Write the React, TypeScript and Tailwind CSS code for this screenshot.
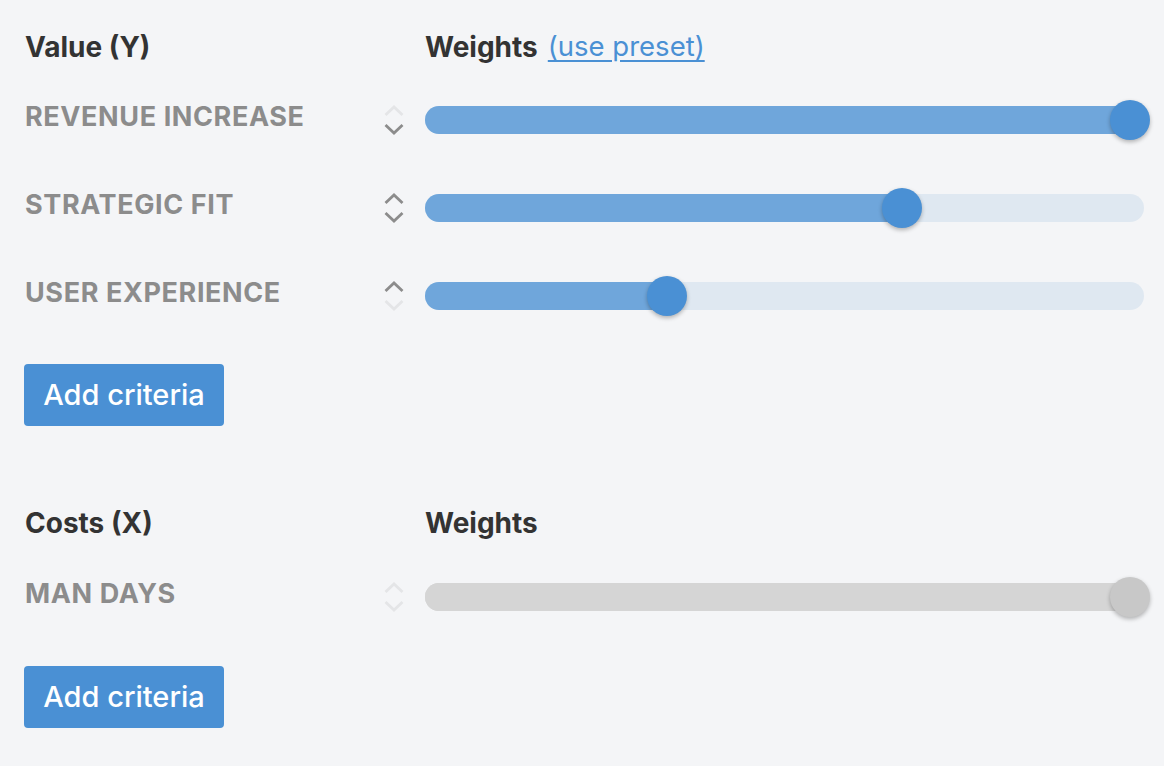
import React from "react";

const font = { fontFamily: "Inter, 'Noto Sans', sans-serif" };

function Chevrons({ up, down }: { up: boolean; down: boolean }) {
  const on = "#8c8c8c";
  const off = "#e4e5e7";
  return (
    <div className="flex w-[60px] flex-col items-center justify-center gap-[6px] pr-[2px]">
      <svg width="22" height="13" viewBox="0 0 22 13">
        <path d="M2.5 11 L11 3 L19.5 11" fill="none" stroke={up ? on : off} strokeWidth="2.8" />
      </svg>
      <svg width="22" height="13" viewBox="0 0 22 13">
        <path d="M2.5 2 L11 10 L19.5 2" fill="none" stroke={down ? on : off} strokeWidth="2.8" />
      </svg>
    </div>
  );
}

function Slider({ pct, disabled }: { pct: number; disabled?: boolean }) {
  const fill = disabled ? "bg-[#d5d5d5]" : "bg-[#6fa6db]";
  const rest = disabled ? "bg-[#d5d5d5]" : "bg-[#dfe8f1]";
  const knob = disabled ? "bg-[#c8c8c8]" : "bg-[#4a90d4]";
  return (
    <div className={`relative h-[28px] flex-1 rounded-full ${rest}`}>
      <div className={`absolute left-0 top-0 h-full rounded-full ${fill}`} style={{ width: `${pct}%` }} />
      <div
        className={`absolute top-1/2 h-[40px] w-[40px] -translate-x-1/2 -translate-y-1/2 rounded-full shadow-[0_2px_4px_rgba(0,0,0,0.28)] ${knob}`}
        style={{ left: `${pct}%` }}
      />
    </div>
  );
}

function Row({ label, pct, up, down, disabled }: { label: string; pct: number; up: boolean; down: boolean; disabled?: boolean }) {
  return (
    <div className="flex h-[88px] items-center">
      <div className="w-[340px] pb-[6px] text-[27px] font-bold tracking-[0.6px] text-[#8c8c8c]">{label}</div>
      <Chevrons up={up} down={down} />
      <Slider pct={pct} disabled={disabled} />
    </div>
  );
}

export default function App() {
  return (
    <div className="min-h-[766px] w-[1164px] bg-[#f4f5f7] pl-[25px] pr-[20px] pt-[27px]" style={font}>
      <div className="flex h-[40px] items-center text-[28px] font-bold text-[#333333]">
        <div className="w-[400px]">Value (Y)</div>
        <div className="flex items-center gap-[10px]">
          <span>Weights</span>
          <a href="#" className="text-[27.5px] font-normal text-[#4a90d4] underline underline-offset-[4px]">(use preset)</a>
        </div>
      </div>
      <div className="mt-[9px]">
        <Row label="REVENUE INCREASE" pct={98} up={false} down={true} />
        <Row label="STRATEGIC FIT" pct={66.4} up={true} down={true} />
        <Row label="USER EXPERIENCE" pct={33.6} up={true} down={false} />
      </div>
      <button className="-ml-[1px] mt-[24px] flex h-[62px] w-[200px] items-center justify-center rounded-[4px] bg-[#4a90d4] text-[29px] font-medium text-white">
        Add criteria
      </button>
      <div className="mt-[77px] flex h-[40px] items-center text-[28px] font-bold text-[#333333]">
        <div className="w-[400px]">Costs (X)</div>
        <div>Weights</div>
      </div>
      <div className="mt-[10px]">
        <div className="flex h-[88px] items-center">
          <div className="w-[340px] pb-[6px] text-[27px] font-bold tracking-[0.6px] text-[#8c8c8c]">MAN DAYS</div>
          <Chevrons up={false} down={false} />
          <Slider pct={98} disabled />
        </div>
      </div>
      <button className="-ml-[1px] mt-[25px] flex h-[62px] w-[200px] items-center justify-center rounded-[4px] bg-[#4a90d4] text-[29px] font-medium text-white">
        Add criteria
      </button>
    </div>
  );
}
